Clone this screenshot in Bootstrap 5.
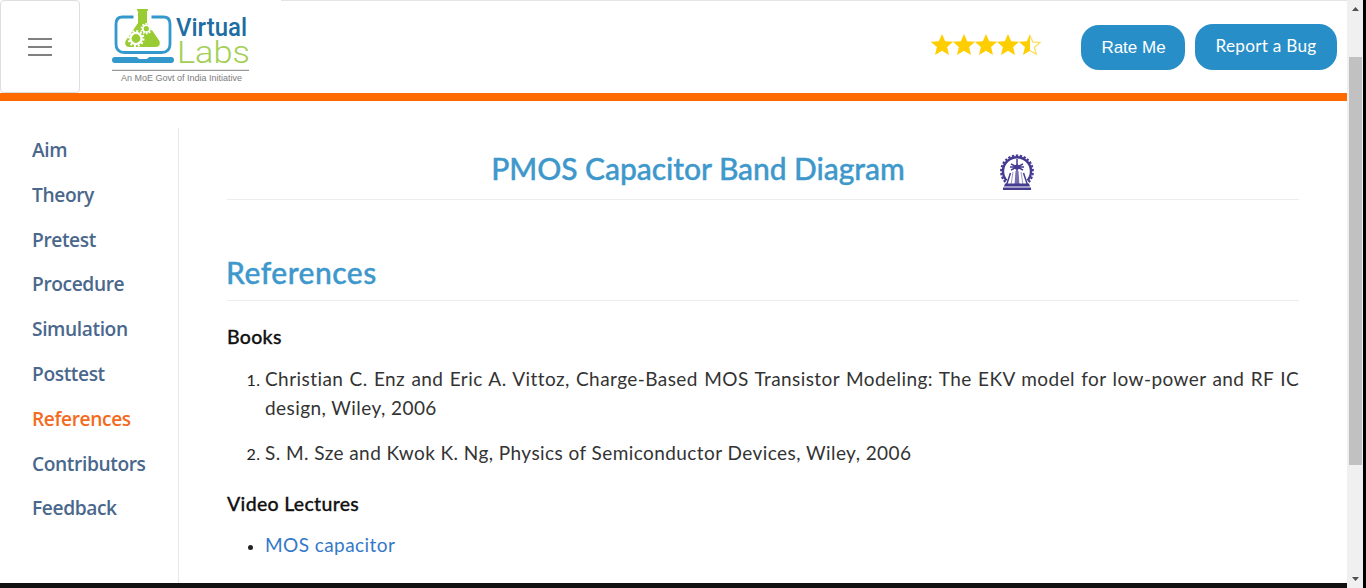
<!DOCTYPE html>
<html lang="en">
<head>
<meta charset="utf-8">
<meta name="viewport" content="width=device-width, initial-scale=1">
<title>Virtual Labs</title>
<link href="https://cdn.jsdelivr.net/npm/bootstrap@5.3.0/dist/css/bootstrap.min.css" rel="stylesheet">
<style>
body{font-family:Lato,"Open Sans",sans-serif;color:#333;background:#fff}
.app-window{height:588px;background:#000;padding-right:3px}
.site-header{height:101px;border-bottom:8px solid #ff6a00}
.menu-btn{width:80px;height:93px;border:1px solid #dedede;border-radius:4px;padding:0}
.logo-art{width:150px;height:93px;margin-left:26px}
.header-tools{height:93px;margin-left:25px;padding-right:10px;border-top:1px solid #e4e4e4}
.stars{width:112px;height:24px;margin-right:38px;margin-bottom:5px}
.pill{background:#288ec8;color:#fff;border-radius:18px;border:0;padding:0;white-space:nowrap}
.pill:hover{background:#1c77ab;color:#fff}
.pill-rate{width:104px;height:45px;font:17px/45px "Liberation Sans",sans-serif;margin-right:10px;margin-top:1px;padding-left:1px}
.pill-bug{width:142px;height:46px;font-size:17.2px;line-height:44px;letter-spacing:.25px;padding-bottom:2px;margin-bottom:1px}
.side{width:179px;margin-top:27px;border-right:1px solid #e6e8ea;padding:0 0 0 32px}
.side .nav-link{font:600 19.2px/44.8px "Open Sans",sans-serif;color:#4a678c;padding:0;letter-spacing:-.4px;white-space:nowrap}
.side .nav-link.active{color:#f36b21}
.content{margin-left:48px;margin-right:48px;color:#333}
.blue-title{color:#3e98cb;font-size:30px;font-weight:500;line-height:36px;margin:0;-webkit-text-stroke:.4px #3e98cb;white-space:nowrap}
.main-title{padding-top:3px;letter-spacing:-.05px}
.sub-title{letter-spacing:.5px;margin-left:-1px}
.title-row{height:99px;border-bottom:1px solid #ededed;padding-top:46px}
.section-row{height:101px;border-bottom:1px solid #ededed;padding-top:54px}
.emblem{width:36px;height:40px;margin-left:94px;margin-top:5px}
.group-title{color:#111;font-size:19.5px;line-height:28px;margin:0;padding-top:22px;font-weight:500;-webkit-text-stroke:.3px #111;letter-spacing:.3px}
.refs + .group-title{padding-top:23px}
.refs{font-size:19px;line-height:28.8px;padding-left:38px;margin:14px 0 0;letter-spacing:.43px}
ul.refs{margin-top:13px}
.refs .first{text-align:justify}
.refs a{color:#3478c8;text-decoration:none}
.refs ::marker{color:#222;font-size:16px}
.scroll-rail{width:16px;background:#f0f0f0;padding:0 1px 0 2px}
.scroll-thumb{height:408px;background:#c1c1c1}
.bottom-strip{height:5px;background:#111}
</style>
</head>
<body>
<div class="app-window d-flex overflow-hidden">
  <div class="flex-grow-1 d-flex flex-column bg-white">
    <header class="site-header d-flex align-items-center flex-shrink-0">
      <button class="menu-btn bg-white d-flex align-items-center justify-content-center" aria-label="Menu">
        <svg width="24" height="20" viewBox="0 0 24 20"><path d="M0 2h24M0 10h24M0 18h24" stroke="#808080" stroke-width="1.8"/></svg>
      </button>
      <svg class="logo-art" viewBox="106 0 150 93">
        <path d="M133.500 17h-11q-6.500 0-6.500 7v20q0 8.500 8.500 8.500h37q8.500 0 8.500-8.500V24q0-7-6.500-7h-12" fill="none" stroke="#3399cc" stroke-width="2.8"/>
        <path d="M115 57h22q1 2 3 2h6q2 0 3-2h22q3 0 3 3t-3 3h-56q-3 0-3-3t3-3z" fill="#3399cc"/>
        <path d="M137 9h11v1.800h-1v12.200l12.500 18q1.500 6-4.500 6h-25q-6 0-4.500-6l12.500-18V10.800h-1z" fill="#99cc33"/>
        <g fill="none" stroke="#fff">
          <circle cx="136" cy="38.5" r="5.6" stroke-width="2.4"/>
          <circle cx="136" cy="38.5" r="7.5" stroke-width="2" stroke-dasharray="2 1.93"/>
          <circle cx="146.3" cy="28.7" r="3.5" stroke-width="1.8"/>
          <circle cx="146.3" cy="28.7" r="5" stroke-width="1.5" stroke-dasharray="1.6 1.54"/>
        </g>
        <text x="176" y="36" font-family="Roboto,sans-serif" font-size="26.5" font-weight="500" textLength="71" lengthAdjust="spacingAndGlyphs" fill="#216da1">Virtual</text>
        <text x="177" y="63" font-family="Roboto,sans-serif" font-size="32" font-weight="300" textLength="73" lengthAdjust="spacingAndGlyphs" fill="#a3cf55">Labs</text>
        <path d="M112 70.3h137" stroke="#999" stroke-width="1.2"/>
        <text x="121" y="81" font-family="Liberation Sans,sans-serif" font-size="8.8" textLength="121" lengthAdjust="spacingAndGlyphs" fill="#7b7b7b">An MoE Govt of India Initiative</text>
      </svg>
      <div class="header-tools d-flex align-items-center justify-content-end flex-grow-1">
        <svg class="stars" viewBox="0 0 112 24">
          <defs><path id="st" d="M11 1l3.200 7.200 8 .6-6.100 5.200 1.900 8L11 17.800 4 22l1.900-8L-.2 8.800l8-.6z"/><clipPath id="half"><path d="M-1 0h12v24H-1z"/></clipPath></defs>
          <g fill="#ffce00"><use href="#st" x="0"/><use href="#st" x="22"/><use href="#st" x="44"/><use href="#st" x="66"/><g transform="translate(88)"><use href="#st" clip-path="url(#half)"/><path d="M11 2.500l2.800 6.400 7.200.6-5.500 4.700 1.700 7L11 17.400" fill="none" stroke="#ffdc55" stroke-width="1.200"/></g></g>
        </svg>
        <button class="btn pill pill-rate">Rate Me</button>
        <button class="btn pill pill-bug">Report a Bug</button>
      </div>
    </header>
    <div class="d-flex flex-grow-1">
      <nav class="side nav flex-column flex-nowrap flex-shrink-0">
        <a class="nav-link" href="#">Aim</a>
        <a class="nav-link" href="#">Theory</a>
        <a class="nav-link" href="#">Pretest</a>
        <a class="nav-link" href="#">Procedure</a>
        <a class="nav-link" href="#">Simulation</a>
        <a class="nav-link" href="#">Posttest</a>
        <a class="nav-link active" href="#">References</a>
        <a class="nav-link" href="#">Contributors</a>
        <a class="nav-link" href="#">Feedback</a>
      </nav>
      <main class="content flex-grow-1">
        <div class="title-row d-flex align-items-start justify-content-center">
          <h1 class="blue-title main-title">PMOS Capacitor Band Diagram</h1>
          <svg class="emblem" viewBox="0 0 36 40">
            <g fill="none" stroke="#453b91">
              <path d="M7.500 28.500A14 14 0 1 1 28.500 28.500" stroke-width="2.400"/>
              <path d="M6.300 30A15.800 15.800 0 1 1 29.700 30" stroke-width="2.200" stroke-dasharray="2.300 1.600"/>
              <path d="M18 7v26M12 12l12 6M12 18l12-6M11 15h14M11.500 21l-4 12M24.500 21l4 12" stroke-width="1.500"/>
              <path d="M14 20l-2 13M22 20l2 13" stroke="#9c96cb"/>
            </g>
            <circle cx="18" cy="15" r="2.600" fill="#453b91"/>
            <path d="M16.500 19h3l1 14h-5z" fill="#756eb0"/>
            <path d="M6 31.500h24l1 3H5zM4 35.500h28v2.500H4z" fill="#453b91"/>
          </svg>
        </div>
        <div class="section-row"><h2 class="blue-title sub-title">References</h2></div>
        <h3 class="group-title">Books</h3>
        <ol class="refs">
          <li class="first">Christian C. Enz and Eric A. Vittoz, Charge-Based MOS Transistor Modeling: The EKV model for low-power and RF IC design, Wiley, 2006</li>
          <li class="second mt-3">S. M. Sze and Kwok K. Ng, Physics of Semiconductor Devices, Wiley, 2006</li>
        </ol>
        <h3 class="group-title">Video Lectures</h3>
        <ul class="refs"><li><a href="#">MOS capacitor</a></li></ul>
      </main>
    </div>
    <div class="bottom-strip flex-shrink-0"></div>
  </div>
  <div class="scroll-rail d-flex flex-column justify-content-between flex-shrink-0">
    <div>
      <svg class="d-block" width="13" height="57"><path d="M3 11l3.500-4 3.500 4z" fill="#505050"/></svg>
      <div class="scroll-thumb"></div>
    </div>
    <svg class="d-block" width="13" height="17"><path d="M3 6h7L6.500 10z" fill="#505050"/></svg>
  </div>
</div>
<script src="https://cdn.jsdelivr.net/npm/bootstrap@5.3.0/dist/js/bootstrap.bundle.min.js"></script>
</body>
</html>
